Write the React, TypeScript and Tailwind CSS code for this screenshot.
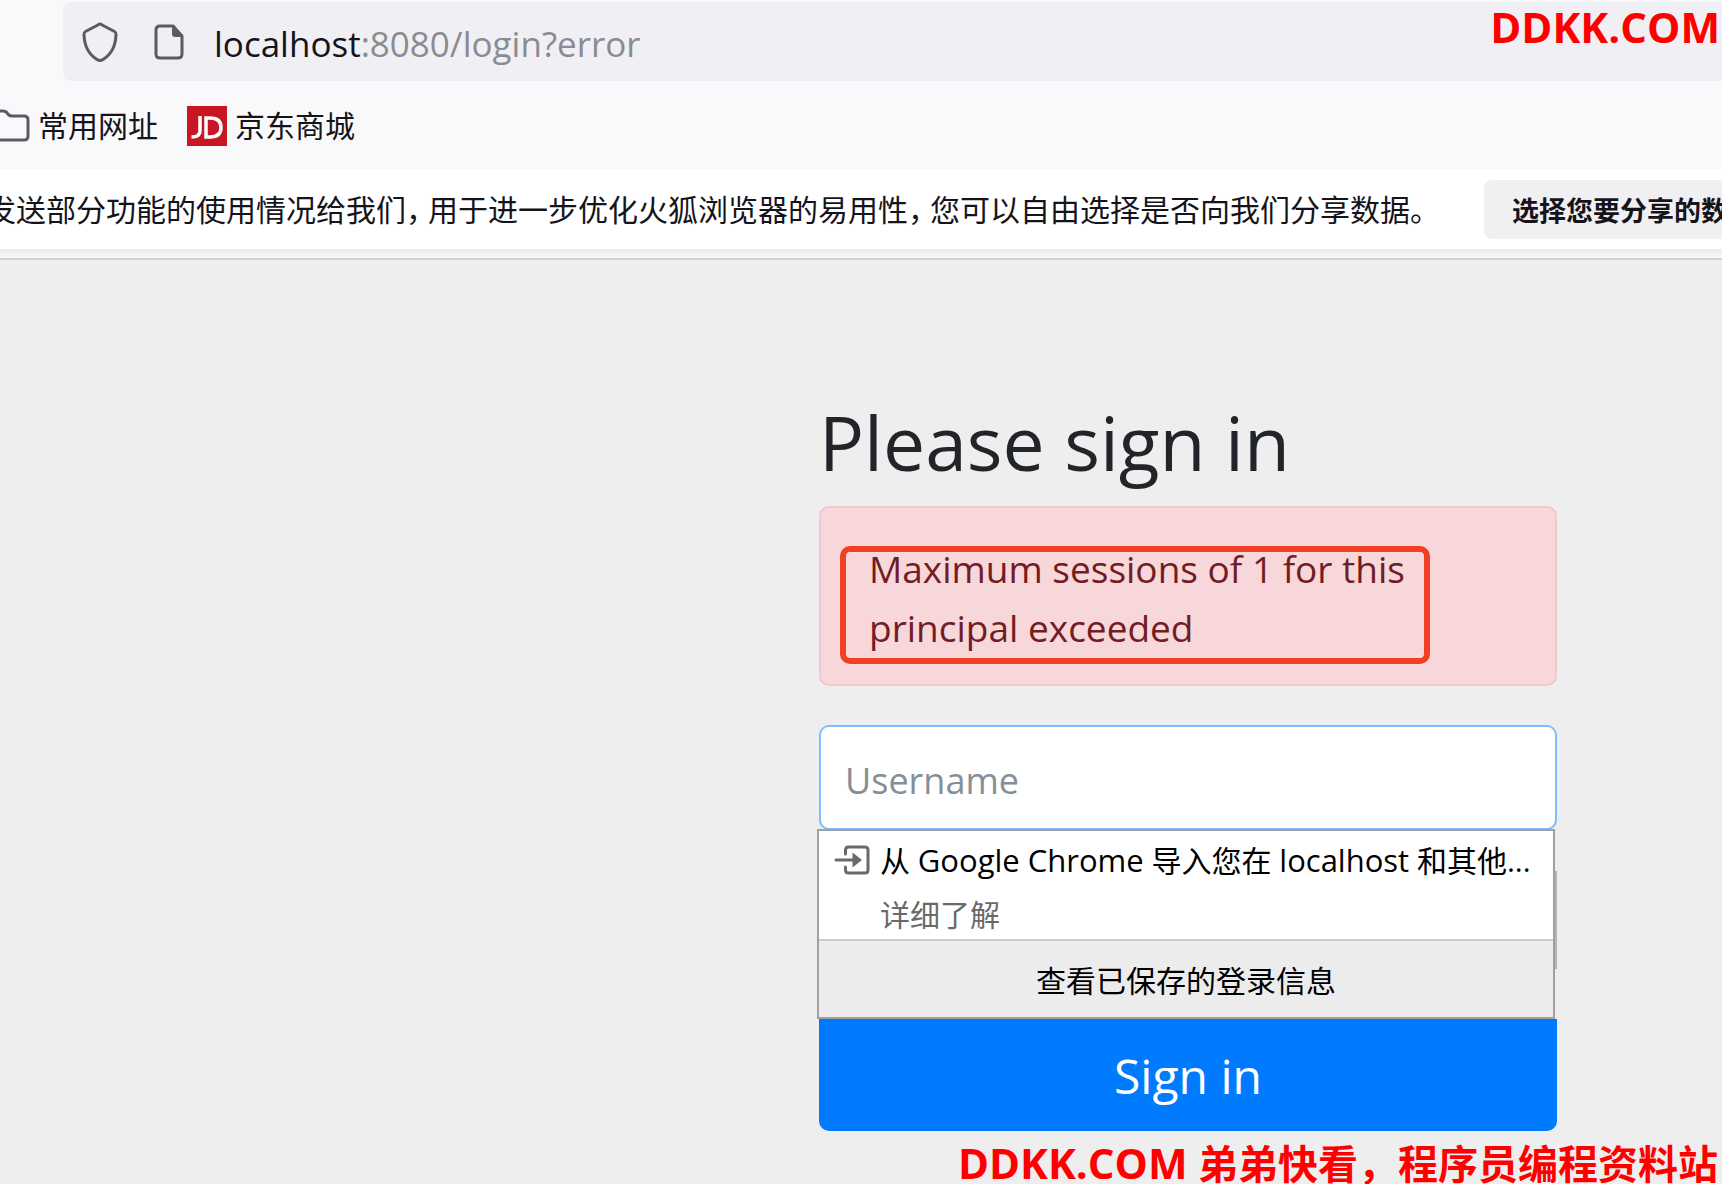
import React from "react";

function ShieldIcon() {
  return (
    <svg className="h-10 w-9 shrink-0" viewBox="0 0 36 40" fill="none" stroke="#5b5b66" strokeWidth="3" strokeLinejoin="round">
      <path d="M18 2 C17 2 15.500 3.200 14 4 L3.500 9.500 C2.200 10.200 2 11 2 12.500 C2.300 24 7 32.500 15 37.500 C17.200 39 18.800 39 21 37.500 C29 32.500 33.700 24 34 12.500 C34 11 33.800 10.200 32.500 9.500 L22 4 C20.500 3.200 19 2 18 2 Z" />
    </svg>
  );
}

function PageIcon() {
  return (
    <svg className="h-9 w-[30px] shrink-0" viewBox="0 0 30 36" fill="none" stroke="#5b5b66" strokeWidth="3" strokeLinejoin="round">
      <path d="M6 2 H19 L28 12 V30 Q28 34 24 34 H6 Q2 34 2 30 V6 Q2 2 6 2 Z" />
      <path d="M18 2 V10 Q18 13 21 13 H28 V11 L20 1 Z" fill="#5b5b66" stroke="none" />
    </svg>
  );
}

function FolderIcon() {
  return (
    <svg className="h-[34px] w-[30px] shrink-0" viewBox="0 0 30 34" fill="none" stroke="#5b5b66" strokeWidth="3" strokeLinejoin="round">
      <path d="M-6 2 H3 Q6 2 7.500 4.500 Q9 7 12 7 H24 Q28 7 28 11 V27 Q28 31 24 31 H-6" />
    </svg>
  );
}

function JdIcon() {
  return (
    <svg className="h-10 w-10 shrink-0" viewBox="0 0 40 40" fill="none" stroke="#fff" strokeWidth="3.500">
      <rect width="40" height="40" fill="#c81623" stroke="none" />
      <path d="M13 10 V25 Q13 31 4.500 31" />
      <path d="M19 12 V31 H23 Q34 31 34 21.500 Q34 12 23 12 Z" />
    </svg>
  );
}

function ImportIcon() {
  return (
    <svg className="h-[30px] w-9 shrink-0" viewBox="0 0 36 30" fill="none" stroke="#6a6a6a" strokeWidth="3" strokeLinecap="round">
      <path d="M11.500 9 V5 Q11.500 2 14.500 2 H31 Q34 2 34 5 V25 Q34 28 31 28 H14.500 Q11.500 28 11.500 25 V22" />
      <path d="M2 15 H20" />
      <path d="M18.500 7.500 L28 15 L18.500 22.500 Z" fill="#6a6a6a" stroke="none" />
    </svg>
  );
}

const noticeParts = [
  "发送部分功能的使用情况给我们，",
  "用于进一步优化火狐浏览器的易用性，",
  "您可以自由选择是否向我们分享数据。",
];

export default function App() {
  return (
    <div className="relative flex min-h-screen flex-col overflow-hidden bg-[#eeeeee] font-['Open_Sans','Noto_Sans_CJK_SC',sans-serif] text-[#15141a]">
      <header className="bg-[#f9f9fb] pt-0.5">
        <div className="ml-[63px] flex h-[79px] items-center rounded-l-lg bg-[#f0f0f4] pl-[19px]">
          <ShieldIcon />
          <div className="w-9" />
          <PageIcon />
          <p className="ml-[30px] pt-1 whitespace-nowrap text-[35px] leading-[48px]">
            localhost<span className="text-[#8b8b91]">:8080/login?error</span>
          </p>
        </div>
        <nav className="flex h-[88px] items-center pt-0.5 text-[30px] leading-[40px]">
          <a href="#common" className="flex items-center gap-2">
            <FolderIcon />
            常用网址
          </a>
          <a href="#jd" className="ml-[29px] flex items-center gap-2">
            <JdIcon />
            京东商城
          </a>
        </nav>
      </header>

      <section className="flex h-20 items-center bg-white pt-px">
        <p className="-ml-3.5 flex w-[1448px] shrink-0 -space-x-2 whitespace-nowrap text-[30px] leading-[40px]">
          {noticeParts.map((part) => (
            <span key={part}>{part}</span>
          ))}
        </p>
        <button className="ml-[50px] h-[59px] shrink-0 whitespace-nowrap rounded-lg bg-[#f0f0f2] px-7 pt-1 text-[27px] font-bold">
          选择您要分享的数据
        </button>
      </section>
      <div className="h-[11px] border-b-2 border-[#d2d2d3] bg-gradient-to-b from-[#ebebed] to-[#f9f9fb]" />

      <main className="ml-[819px] w-full max-w-[738px] pt-[134px]">
        <h1 className="whitespace-nowrap text-[75px] leading-[96px] text-[#212529]">Please sign in</h1>
        <form>
          <div role="alert" className="relative mt-4 rounded-[10px] border-2 border-[#f5c6cb] bg-[#f8d7da] px-12 pt-[31px] pb-[27px] text-[37px] leading-[59px] text-[#721c24]">
            Maximum sessions of 1 for this
            <br />
            principal exceeded
            <div className="absolute top-[38px] left-[19px] h-[118px] w-[590px] rounded-[10px] border-[6px] border-[#ef4023]" />
          </div>
          <input
            type="text"
            aria-label="Username"
            placeholder="Username"
            className="mt-[39px] block h-[105px] w-full rounded-[10px] border-2 border-[#80bdff] bg-white px-6 pt-1.5 text-[36px] outline-none placeholder:text-[#868e96]"
          />
          <div className="relative -mt-px mr-0.5 -ml-0.5 border-2 border-[#a0a0a0] bg-white text-black">
            <div className="flex h-[110px] items-start gap-[10px] border-b-2 border-[#cccccc] pt-[5px] pl-[15px]">
              <div className="flex h-12 items-center">
                <ImportIcon />
              </div>
              <div className="text-[30px] leading-[48px]">
                <p className="whitespace-nowrap">
                  从 <span className="text-[31px]">Google Chrome</span> 导入您在 <span className="text-[31px]">localhost</span> 和其他...
                </p>
                <a href="#more" className="mt-[6px] block text-[#6a6a6a]">详细了解</a>
              </div>
            </div>
            <button type="button" className="block h-[76px] w-full bg-[#ececec] pt-0.5 text-center text-[30px]">
              查看已保存的登录信息
            </button>
            <div className="absolute top-10 -right-1 h-[98px] w-0.5 bg-[#b4b4b4]" />
          </div>
          <button type="submit" className="block h-28 w-full rounded-b-[10px] bg-[#007bff] pt-0.5 text-[48px] text-white">
            Sign in
          </button>
        </form>
      </main>

      <p className="absolute -top-px right-0.5 whitespace-nowrap text-[42px] leading-[56px] font-bold text-[#ff0000]">DDKK.COM</p>
      <p className="absolute right-1 -bottom-2 whitespace-nowrap text-[40px] leading-[56px] font-bold text-[#ff0000]">
        <span className="text-[42px]">DDKK.COM</span> 弟弟快看，程序员编程资料站
      </p>
    </div>
  );
}
